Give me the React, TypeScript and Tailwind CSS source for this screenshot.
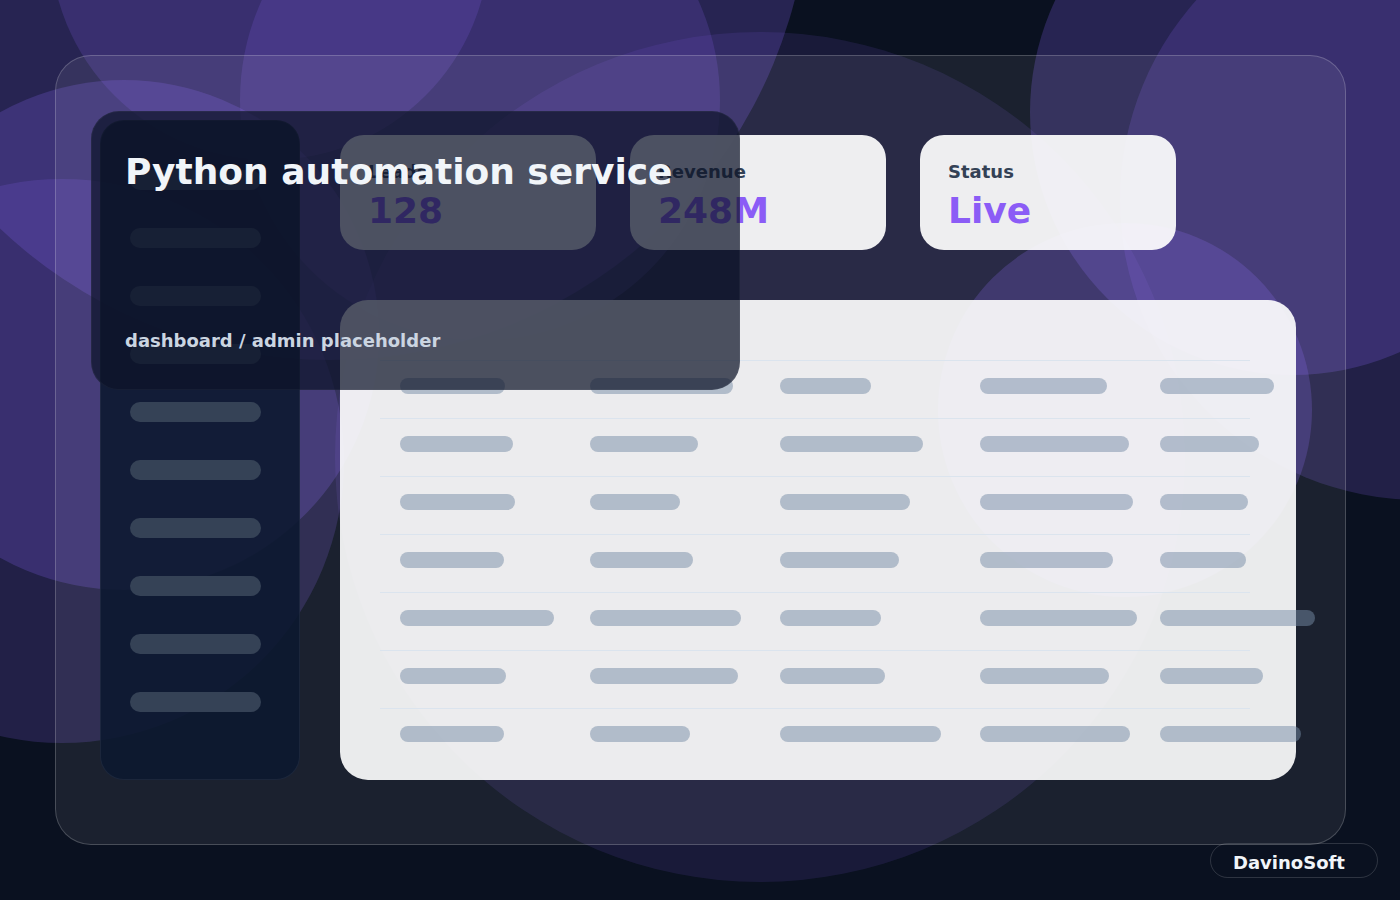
import React from "react";

// bar widths per row, five columns each
const rows: number[][] = [
  [105, 143, 91, 127, 114],
  [113, 108, 143, 149, 99],
  [115, 90, 130, 153, 88],
  [104, 103, 119, 133, 86],
  [154, 151, 101, 157, 155],
  [106, 148, 105, 129, 103],
  [104, 100, 161, 150, 141],
];

const colWidths = ["w-[190px]", "w-[190px]", "w-[200px]", "w-[180px]", "w-[90px]"];

const stats = [
  { label: "Leads", value: "128" },
  { label: "Revenue", value: "248M" },
  { label: "Status", value: "Live" },
];

// soft purple discs behind the frame
function Backdrop() {
  return (
    <div className="absolute inset-0 pointer-events-none">
      <div className="absolute left-[-150px] top-[-600px] w-[960px] h-[960px] rounded-full bg-[#8060e8]/25" />
      <div className="absolute left-[50px] top-[-280px] w-[440px] h-[440px] rounded-full bg-[#8060e8]/20" />
      <div className="absolute left-[240px] top-[-140px] w-[480px] h-[480px] rounded-full bg-[#8060e8]/20" />
      <div className="absolute left-[-131px] top-[80px] w-[510px] h-[510px] rounded-full bg-[#8060e8]/25" />
      <div className="absolute left-[-220px] top-[179px] w-[564px] h-[564px] rounded-full bg-[#8060e8]/20" />
      <div className="absolute left-[335px] top-[32px] w-[850px] h-[850px] rounded-full bg-[#8060e8]/[0.13]" />
      <div className="absolute left-[1030px] top-[-150px] w-[525px] h-[525px] rounded-full bg-[#8060e8]/25" />
      <div className="absolute left-[1120px] top-[-100px] w-[600px] h-[600px] rounded-full bg-[#8060e8]/20" />
      <div className="absolute left-[938px] top-[223px] w-[374px] h-[374px] rounded-full bg-[#8060e8]/25" />
    </div>
  );
}

function Sidebar() {
  return (
    <aside className="w-[200px] shrink-0 rounded-[24px] border border-white/[0.06] bg-[#0c1830]/[0.9] pt-[49px] pl-[29px] flex flex-col gap-[38px]">
      {Array.from({ length: 10 }).map((_, i) => (
        <div key={i} className="w-[131px] h-[20px] rounded-full bg-[#354256]" />
      ))}
    </aside>
  );
}

function StatCard({ label, value }: { label: string; value: string }) {
  return (
    <div className="w-[256px] h-[115px] rounded-[24px] bg-white/[0.92] pt-[26px] px-[28px]">
      <div className="text-[18px] leading-[1.2] font-bold text-[#334155]">{label}</div>
      <div className="mt-[6px] text-[36px] leading-[1.2] font-bold text-[#8b5cf6]">{value}</div>
    </div>
  );
}

function DataTable() {
  return (
    <div className="mt-[50px] flex-1 rounded-[28px] bg-white/[0.91] pt-[60px] pl-[40px] pr-[46px]">
      {rows.map((row, r) => (
        <div key={r} className="border-t border-[#dbe4ee] pt-[17px] pb-[24px] pl-[20px] flex">
          {row.map((w, c) => (
            <div key={c} className={`${colWidths[c]} shrink-0`}>
              <div
                className="h-[16px] rounded-full bg-[rgba(118,140,166,0.5)]"
                style={{ width: w }}
              />
            </div>
          ))}
        </div>
      ))}
    </div>
  );
}

export default function App() {
  return (
    <div
      className="relative w-[1400px] h-[900px] overflow-hidden bg-[#0a1120] pt-[55px] pl-[55px]"
      style={{ fontFamily: '"DejaVu Sans", "Liberation Sans", sans-serif' }}
    >
      <Backdrop />

      <div className="relative w-[1291px] h-[790px] rounded-[36px] border border-white/20 bg-white/[0.07] pt-[64px] pb-[64px] pl-[44px] pr-[49px] flex">
        <Sidebar />

        <main className="ml-[40px] flex-1 flex flex-col pt-[15px]">
          <div className="flex gap-[34px]">
            {stats.map((s) => (
              <StatCard key={s.label} label={s.label} value={s.value} />
            ))}
          </div>
          <DataTable />
        </main>

        {/* floating title card over the dashboard */}
        <div className="absolute left-[35px] top-[55px] w-[649px] h-[279px] rounded-[28px] bg-[#0d1428]/[0.72] border border-white/[0.04] px-[33px] pt-[38px] pb-[37px] flex flex-col justify-between">
          <h1 className="text-[36px] leading-[1.2] font-bold text-[#f1f5f9] whitespace-nowrap">
            Python automation service
          </h1>
          <p className="text-[18px] leading-[1.2] font-bold text-[#cbd5e1]">
            dashboard / admin placeholder
          </p>
        </div>
      </div>

      <div className="absolute right-[22px] bottom-[22px] w-[168px] h-[35px] rounded-full border border-white/15 pl-[22px] pt-[3px] flex items-center">
        <span className="text-[18px] font-bold text-[#f1f5f9]">DavinoSoft</span>
      </div>
    </div>
  );
}
